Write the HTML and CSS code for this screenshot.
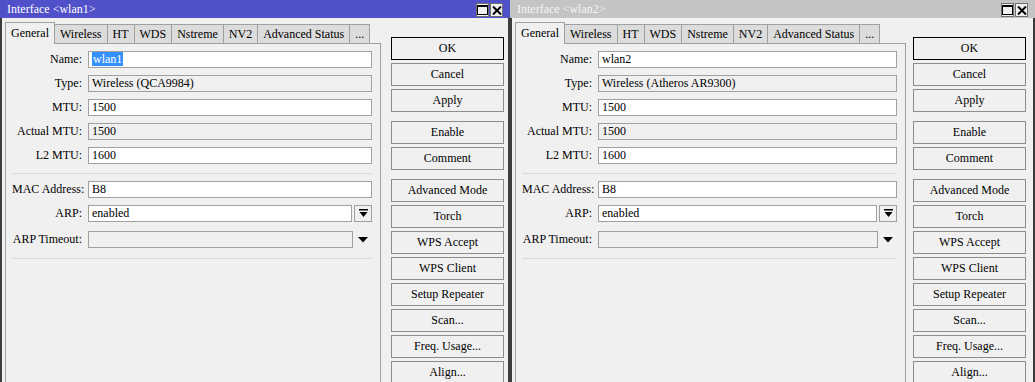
FILE: index.html
```html
<!DOCTYPE html>
<html lang="en">
<head>
    <meta charset="UTF-8">
    <title>Interface wlan1 / wlan2</title>
    <link rel="stylesheet" href="styles.css">
</head>
<body>
    <div class="desk">
        <!-- ventana activa -->
        <div class="window focused">
            <div class="titlebar">
                <span class="title">Interface &lt;wlan1&gt;</span>
                <div class="controls">
                    <span class="ctl"><svg width="11" height="10" viewBox="0 0 11 10"><rect x="0.5" y="0.5" width="10" height="9" fill="none" stroke="#000"/><rect x="0" y="0" width="11" height="2" fill="#000"/></svg></span>
                    <span class="ctl"><svg width="10" height="9" viewBox="0 0 10 9"><path d="M1 0.5 L9 8.5 M9 0.5 L1 8.5" stroke="#000" stroke-width="2"/></svg></span>
                </div>
            </div>
            <div class="content">
                <div class="tabbox">
                    <div class="tabs">
                        <div class="tab sel">General</div>
                        <div class="tab">Wireless</div>
                        <div class="tab">HT</div>
                        <div class="tab">WDS</div>
                        <div class="tab">Nstreme</div>
                        <div class="tab">NV2</div>
                        <div class="tab">Advanced Status</div>
                        <div class="tab">...</div>
                    </div>
                    <div class="panel">
                        <div class="group">
                            <div class="row"><span class="label">Name:</span><div class="field"><span class="selected">wlan1</span></div></div>
                            <div class="row"><span class="label">Type:</span><div class="field ro">Wireless (QCA9984)</div></div>
                            <div class="row"><span class="label">MTU:</span><div class="field">1500</div></div>
                            <div class="row"><span class="label">Actual MTU:</span><div class="field ro">1500</div></div>
                            <div class="row"><span class="label">L2 MTU:</span><div class="field">1600</div></div>
                        </div>
                        <div class="group">
                            <div class="row"><span class="label">MAC Address:</span><div class="field">B8</div></div>
                            <div class="row"><span class="label">ARP:</span><div class="field">enabled</div><span class="drop"><svg width="9" height="9" viewBox="0 0 9 9"><rect x="0" y="0" width="9" height="1.5" fill="#000"/><path d="M0.5 3 H8.5 L4.5 8 Z" fill="#000"/></svg></span></div>
                            <div class="row timeout"><span class="label">ARP Timeout:</span><div class="field ro"></div><span class="arrow"><svg width="10" height="6" viewBox="0 0 10 6"><path d="M0 0 H10 L5 5.5 Z" fill="#000"/></svg></span></div>
                        </div>
                    </div>
                </div>
                <div class="buttons">
                    <div class="btngroup">
                        <div class="btn default">OK</div>
                        <div class="btn">Cancel</div>
                        <div class="btn">Apply</div>
                    </div>
                    <div class="btngroup">
                        <div class="btn">Enable</div>
                        <div class="btn">Comment</div>
                    </div>
                    <div class="btngroup">
                        <div class="btn">Advanced Mode</div>
                        <div class="btn">Torch</div>
                        <div class="btn">WPS Accept</div>
                        <div class="btn">WPS Client</div>
                        <div class="btn">Setup Repeater</div>
                        <div class="btn">Scan...</div>
                        <div class="btn">Freq. Usage...</div>
                        <div class="btn">Align...</div>
                    </div>
                </div>
            </div>
        </div>

        <!-- ventana inactiva -->
        <div class="window wide">
            <div class="titlebar">
                <span class="title">Interface &lt;wlan2&gt;</span>
                <div class="controls">
                    <span class="ctl"><svg width="11" height="10" viewBox="0 0 11 10"><rect x="0.5" y="0.5" width="10" height="9" fill="none" stroke="#000"/><rect x="0" y="0" width="11" height="2" fill="#000"/></svg></span>
                    <span class="ctl"><svg width="10" height="9" viewBox="0 0 10 9"><path d="M1 0.5 L9 8.5 M9 0.5 L1 8.5" stroke="#000" stroke-width="2"/></svg></span>
                </div>
            </div>
            <div class="content">
                <div class="tabbox">
                    <div class="tabs">
                        <div class="tab sel">General</div>
                        <div class="tab">Wireless</div>
                        <div class="tab">HT</div>
                        <div class="tab">WDS</div>
                        <div class="tab">Nstreme</div>
                        <div class="tab">NV2</div>
                        <div class="tab">Advanced Status</div>
                        <div class="tab">...</div>
                    </div>
                    <div class="panel">
                        <div class="group">
                            <div class="row"><span class="label">Name:</span><div class="field">wlan2</div></div>
                            <div class="row"><span class="label">Type:</span><div class="field ro">Wireless (Atheros AR9300)</div></div>
                            <div class="row"><span class="label">MTU:</span><div class="field">1500</div></div>
                            <div class="row"><span class="label">Actual MTU:</span><div class="field ro">1500</div></div>
                            <div class="row"><span class="label">L2 MTU:</span><div class="field">1600</div></div>
                        </div>
                        <div class="group">
                            <div class="row"><span class="label">MAC Address:</span><div class="field">B8</div></div>
                            <div class="row"><span class="label">ARP:</span><div class="field">enabled</div><span class="drop"><svg width="9" height="9" viewBox="0 0 9 9"><rect x="0" y="0" width="9" height="1.5" fill="#000"/><path d="M0.5 3 H8.5 L4.5 8 Z" fill="#000"/></svg></span></div>
                            <div class="row timeout"><span class="label">ARP Timeout:</span><div class="field ro"></div><span class="arrow"><svg width="10" height="6" viewBox="0 0 10 6"><path d="M0 0 H10 L5 5.5 Z" fill="#000"/></svg></span></div>
                        </div>
                    </div>
                </div>
                <div class="buttons">
                    <div class="btngroup">
                        <div class="btn default">OK</div>
                        <div class="btn">Cancel</div>
                        <div class="btn">Apply</div>
                    </div>
                    <div class="btngroup">
                        <div class="btn">Enable</div>
                        <div class="btn">Comment</div>
                    </div>
                    <div class="btngroup">
                        <div class="btn">Advanced Mode</div>
                        <div class="btn">Torch</div>
                        <div class="btn">WPS Accept</div>
                        <div class="btn">WPS Client</div>
                        <div class="btn">Setup Repeater</div>
                        <div class="btn">Scan...</div>
                        <div class="btn">Freq. Usage...</div>
                        <div class="btn">Align...</div>
                    </div>
                </div>
            </div>
        </div>
    </div>
</body>
</html>
```

FILE: styles.css
```css
html, body {
    margin: 0;
    height: 100%;
    overflow: hidden;
}

body {
    font-family: "Liberation Serif", "Times New Roman", "DejaVu Serif", serif;
    font-size: 12px;
    color: #000;
    background: #f0f0f0;
}

.desk {
    display: flex;
    height: 100%;
}

.window {
    width: 510px;
    flex-shrink: 0;
    display: flex;
    flex-direction: column;
    background: #f0f0f0;
    border-left: 2px solid #3c3c3c;
    border-right: 2px solid #3c3c3c;
    box-sizing: border-box;
}

.window.wide {
    width: 525px;
}

.titlebar {
    height: 18px;
    flex-shrink: 0;
    display: flex;
    align-items: center;
    justify-content: space-between;
    background: #c4c4c4;
    color: #f4f4f4;
    padding: 0 7px;
    margin: 0 -2px;
}

.focused .titlebar {
    background: #5050c8;
    color: #fff;
}

.controls {
    display: flex;
    gap: 1px;
    align-self: flex-end;
    margin-bottom: 1px;
}

.ctl {
    width: 13px;
    height: 14px;
    box-sizing: border-box;
    border: 1px solid #707070;
    background: #f0f0f0;
    display: flex;
    align-items: center;
    justify-content: center;
}

.content {
    display: flex;
    flex: 1;
    padding: 4px 4px 0 3px;
    gap: 10px;
}

.wide .content {
    gap: 7px;
}

.tabbox {
    width: 376px;
    display: flex;
    flex-direction: column;
}

.wide .tabbox {
    width: 391px;
}

.tabs {
    display: flex;
    align-items: flex-end;
    height: 21px;
    position: relative;
    z-index: 1;
}

.tab {
    height: 19px;
    line-height: 18px;
    padding: 0 5px;
    background: #dcdcdc;
    border: 1px solid #a0a0a0;
    border-bottom: none;
    margin-right: -1px;
    box-sizing: border-box;
    white-space: nowrap;
}

.tab.sel {
    height: 22px;
    line-height: 20px;
    margin-bottom: -1px;
    background: #f0f0f0;
}

.panel {
    flex: 1;
    border: 1px solid #a0a0a0;
    border-bottom: none;
    padding: 7px 8px 0 6px;
}

.group {
    display: flex;
    flex-direction: column;
    gap: 7px;
    padding-bottom: 9px;
    border-bottom: 1px solid #d8d8d8;
}

.group + .group {
    margin-top: 7px;
    padding-bottom: 10px;
}

.row {
    display: flex;
    align-items: center;
    height: 17px;
}

.row.timeout {
    margin-top: 2px;
}

.label {
    width: 70px;
    margin-right: 6px;
    text-align: right;
    white-space: nowrap;
}

.field {
    flex: 1;
    height: 17px;
    line-height: 15px;
    box-sizing: border-box;
    border: 1px solid #a0a0a0;
    background: #fff;
    padding: 0 3px;
    white-space: nowrap;
}

.field.ro {
    background: #f0f0f0;
}

.selected {
    background: #3390ff;
    color: #fff;
    padding: 0 1px;
    display: inline-block;
    line-height: 14px;
}

.drop {
    width: 18px;
    height: 17px;
    margin-left: 2px;
    box-sizing: border-box;
    border: 1px solid #a0a0a0;
    display: flex;
    align-items: center;
    justify-content: center;
}

.arrow {
    width: 19px;
    display: flex;
    justify-content: center;
}

.buttons {
    width: 113px;
    padding-top: 15px;
    display: flex;
    flex-direction: column;
    gap: 9px;
}

.btngroup {
    display: flex;
    flex-direction: column;
    gap: 3px;
}

.btn {
    height: 23px;
    line-height: 21px;
    box-sizing: border-box;
    border: 1px solid #8c8c8c;
    text-align: center;
    background: #f0f0f0;
    white-space: nowrap;
}

.btn.default {
    border-color: #000;
}
```
